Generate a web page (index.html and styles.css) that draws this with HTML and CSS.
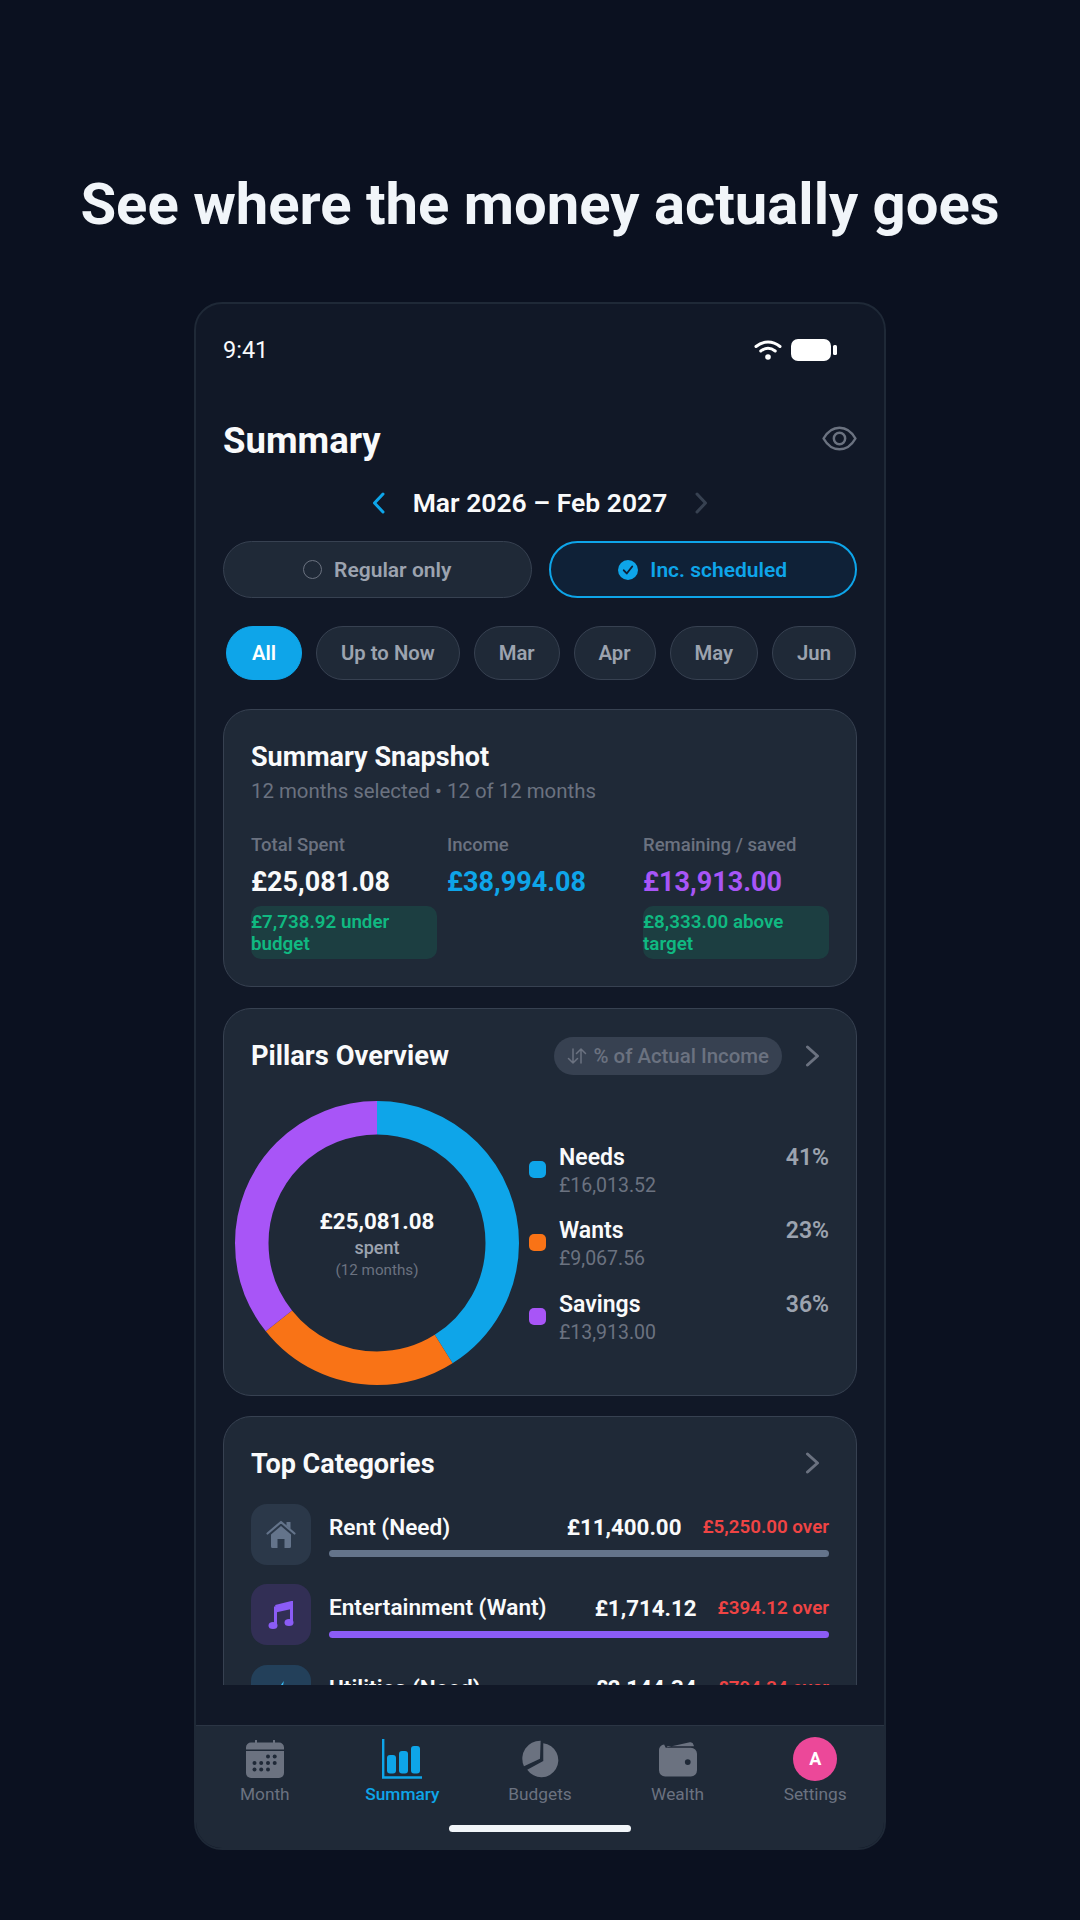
FILE: index.html
```html
<!DOCTYPE html>
<html lang="en">
<head>
<meta charset="utf-8">
<title>Summary</title>
<link rel="stylesheet" href="styles.css">
</head>
<body>
<h1 class="headline">See where the money actually goes</h1>
<main class="phone">
  <div class="status">
    <span class="status-time">9:41</span>
    <div class="status-icons">
      <svg class="ic-wifi" viewBox="0 0 28 21" aria-hidden="true"><path d="M2 7.500C9.500 1.500 18.500 1.500 26 7.500M6.800 12C11.500 8.500 16.500 8.500 21.200 12" fill="none" stroke="#fff" stroke-width="3" stroke-linecap="round"/><circle cx="14" cy="18" r="2.800" fill="#fff"/></svg>
      <svg class="ic-battery" viewBox="0 0 46 22" aria-hidden="true"><rect x="0" y="0" width="40" height="22" rx="7" fill="#fff"/><rect x="42" y="6" width="4" height="10" rx="1.500" fill="#fff"/></svg>
    </div>
  </div>
  <div class="scroll">
    <header class="page-head">
      <h2 class="page-title">Summary</h2>
      <svg class="ic-eye" viewBox="0 0 34 24" aria-hidden="true"><path d="M1.500 12C5.500 5 10.500 1.500 17 1.500S28.500 5 32.500 12C28.500 19 23.500 22.500 17 22.500S5.500 19 1.500 12Z" fill="none" stroke="#6b7280" stroke-width="2.400" stroke-linejoin="round"/><circle cx="17" cy="12" r="5.500" fill="none" stroke="#6b7280" stroke-width="2.400"/></svg>
    </header>
    <div class="date-row">
      <svg class="ic-chev-date" viewBox="0 0 13 22" aria-hidden="true"><path d="M11 2 2.500 11 11 20" fill="none" stroke="#0ea5e9" stroke-width="3" stroke-linecap="round" stroke-linejoin="round"/></svg>
      <span class="date-text">Mar 2026 – Feb 2027</span>
      <svg class="ic-chev-date" viewBox="0 0 13 22" aria-hidden="true"><path d="M2 2 10.500 11 2 20" fill="none" stroke="#374151" stroke-width="3" stroke-linecap="round" stroke-linejoin="round"/></svg>
    </div>
    <div class="toggles">
      <div class="toggle">
        <span class="radio"></span>
        <span>Regular only</span>
      </div>
      <div class="toggle toggle-on">
        <svg class="ic-check" viewBox="0 0 19 19" aria-hidden="true"><circle cx="9.500" cy="9.500" r="9.500" fill="#0ea5e9"/><path d="M5.500 9.800 8.300 12.800 13.500 6.200" fill="none" stroke="#0f2137" stroke-width="1.800" stroke-linecap="round" stroke-linejoin="round"/></svg>
        <span>Inc. scheduled</span>
      </div>
    </div>
    <div class="chips">
      <span class="chip chip-on">All</span>
      <span class="chip">Up to Now</span>
      <span class="chip">Mar</span>
      <span class="chip">Apr</span>
      <span class="chip">May</span>
      <span class="chip">Jun</span>
    </div>
    <section class="card snapshot">
      <h3 class="card-title">Summary Snapshot</h3>
      <p class="snap-sub">12 months selected • 12 of 12 months</p>
      <div class="snap-grid">
        <div>
          <div class="snap-label">Total Spent</div>
          <div class="snap-value">£25,081.08</div>
          <div class="snap-badge">£7,738.92 under budget</div>
        </div>
        <div>
          <div class="snap-label">Income</div>
          <div class="snap-value c-blue">£38,994.08</div>
        </div>
        <div>
          <div class="snap-label">Remaining / saved</div>
          <div class="snap-value c-purple">£13,913.00</div>
          <div class="snap-badge">£8,333.00 above target</div>
        </div>
      </div>
    </section>
    <section class="card pillars">
      <div class="card-head">
        <h3 class="card-title">Pillars Overview</h3>
        <div class="head-right">
          <span class="basis">
            <svg class="ic-swap" viewBox="0 0 20 16" aria-hidden="true"><path d="M6 1V15M6 15 1.500 10.500M6 15 10.500 10.500M14 15V1M14 1 9.500 5.500M14 1 18.500 5.500" fill="none" stroke="#6b7280" stroke-width="1.500" stroke-linecap="round" stroke-linejoin="round"/></svg>
            % of Actual Income
          </span>
          <svg class="ic-chev" viewBox="0 0 15 22" aria-hidden="true"><path d="M2.500 2 12.500 11 2.500 20" fill="none" stroke="#6b7280" stroke-width="3" stroke-linecap="round" stroke-linejoin="round"/></svg>
        </div>
      </div>
      <div class="pillar-body">
        <div class="donut">
          <svg class="donut-svg" viewBox="0 0 284 284" aria-hidden="true">
            <g fill="none" stroke-width="33.500" transform="rotate(-90 142 142)">
              <circle cx="142" cy="142" r="125.250" pathLength="100" stroke="#0ea5e9" stroke-dasharray="41.070 58.930"/>
              <circle cx="142" cy="142" r="125.250" pathLength="100" stroke="#f97316" stroke-dasharray="23.250 76.750" stroke-dashoffset="-41.070"/>
              <circle cx="142" cy="142" r="125.250" pathLength="100" stroke="#a855f7" stroke-dasharray="35.680 64.320" stroke-dashoffset="-64.320"/>
            </g>
          </svg>
          <div class="donut-center">
            <div class="donut-amt">£25,081.08</div>
            <div class="donut-lbl">spent</div>
            <div class="donut-sub">(12 months)</div>
          </div>
        </div>
        <div class="legend">
          <div class="legend-row">
            <span class="dot bg-blue"></span>
            <div class="legend-text"><div class="legend-name">Needs</div><div class="legend-amt">£16,013.52</div></div>
            <div class="legend-pct">41%</div>
          </div>
          <div class="legend-row">
            <span class="dot bg-orange"></span>
            <div class="legend-text"><div class="legend-name">Wants</div><div class="legend-amt">£9,067.56</div></div>
            <div class="legend-pct">23%</div>
          </div>
          <div class="legend-row">
            <span class="dot bg-purple"></span>
            <div class="legend-text"><div class="legend-name">Savings</div><div class="legend-amt">£13,913.00</div></div>
            <div class="legend-pct">36%</div>
          </div>
        </div>
      </div>
    </section>
    <section class="card cats">
      <div class="cats-head">
        <h3 class="card-title">Top Categories</h3>
        <svg class="ic-chev ic-chev-up" viewBox="0 0 15 22" aria-hidden="true"><path d="M2.500 2 12.500 11 2.500 20" fill="none" stroke="#6b7280" stroke-width="3" stroke-linecap="round" stroke-linejoin="round"/></svg>
      </div>
      <div class="cat-row">
        <div class="cat-icon cat-slate">
          <svg class="ic-cat" viewBox="0 0 30 28" aria-hidden="true"><path d="M1.500 13.500 15 2 28.500 13.500" fill="none" stroke="#64748b" stroke-width="2.200" stroke-linecap="round" stroke-linejoin="round"/><path d="M20.500 2H24.500V9L20.500 5.500Z" fill="#64748b"/><path d="M5 14.500 15 6 25 14.500V26.500A1.500 1.500 0 0 1 23.500 28H18.500V19H11.500V28H6.500A1.500 1.500 0 0 1 5 26.500Z" fill="#64748b"/></svg>
        </div>
        <div class="cat-main">
          <div class="cat-line">
            <span class="cat-name">Rent (Need)</span>
            <span class="cat-amt">£11,400.00</span>
            <span class="cat-over">£5,250.00 over</span>
          </div>
          <div class="cat-bar bar-slate"></div>
        </div>
      </div>
      <div class="cat-row">
        <div class="cat-icon cat-violet">
          <svg class="ic-cat" viewBox="0 0 30 28" aria-hidden="true"><path d="M9.500 5.500 25.500 1.500V21.500" fill="none" stroke="#8b5cf6" stroke-width="3"/><path d="M9.500 5.500 25.500 1.500V8L9.500 11.500Z" fill="#8b5cf6"/><path d="M9.500 5.500V24" fill="none" stroke="#8b5cf6" stroke-width="3"/><ellipse cx="7" cy="24.500" rx="4.500" ry="3.500" fill="#8b5cf6"/><ellipse cx="23" cy="21.500" rx="4.500" ry="3.500" fill="#8b5cf6"/></svg>
        </div>
        <div class="cat-main">
          <div class="cat-line">
            <span class="cat-name">Entertainment (Want)</span>
            <span class="cat-amt">£1,714.12</span>
            <span class="cat-over">£394.12 over</span>
          </div>
          <div class="cat-bar bar-violet"></div>
        </div>
      </div>
      <div class="cat-row">
        <div class="cat-icon cat-sky">
          <svg class="ic-cat ic-bolt" viewBox="0 0 30 30" aria-hidden="true"><path d="M18 0 6 17H14L12 30 24 12H16Z" fill="#38bdf8"/></svg>
        </div>
        <div class="cat-main">
          <div class="cat-line">
            <span class="cat-name">Utilities (Need)</span>
            <span class="cat-amt">£2,144.34</span>
            <span class="cat-over">£794.34 over</span>
          </div>
          <div class="cat-bar bar-sky"></div>
        </div>
      </div>
    </section>
  </div>
  <nav class="nav">
    <div class="nav-items">
      <div class="nav-item">
        <div class="nav-icon">
          <svg class="ic-nav" viewBox="0 0 38 38" aria-hidden="true"><path d="M10 0.500V4M28 0.500V4" stroke="#6b7280" stroke-width="2" stroke-linecap="round"/><path d="M5 2.500H33A5 5 0 0 1 38 7.500V9.500H0V7.500A5 5 0 0 1 5 2.500Z" fill="#6b7280"/><path d="M0 11H38V33A5 5 0 0 1 33 38H5A5 5 0 0 1 0 33Z" fill="#6b7280"/><g fill="#1f2937"><circle cx="22" cy="16.500" r="2"/><circle cx="28.700" cy="16.500" r="2"/><circle cx="8.500" cy="23" r="2"/><circle cx="15.200" cy="23" r="2"/><circle cx="22" cy="23" r="2"/><circle cx="28.700" cy="23" r="2"/><circle cx="8.500" cy="29.500" r="2"/><circle cx="15.200" cy="29.500" r="2"/><circle cx="22" cy="29.500" r="2"/></g></svg>
        </div>
        <span class="nav-label">Month</span>
      </div>
      <div class="nav-item nav-on">
        <div class="nav-icon">
          <svg class="ic-nav-chart" viewBox="0 0 40 40" aria-hidden="true"><path d="M1.200 0V38.500H40" fill="none" stroke="#0ea5e9" stroke-width="2.400"/><rect x="5" y="16" width="9" height="18.500" rx="3" fill="#0ea5e9"/><rect x="17" y="12" width="9" height="22.500" rx="3" fill="#0ea5e9"/><rect x="29" y="7" width="9" height="27.500" rx="3" fill="#0ea5e9"/></svg>
        </div>
        <span class="nav-label">Summary</span>
      </div>
      <div class="nav-item">
        <div class="nav-icon">
          <svg class="ic-nav" viewBox="60 26 116 116" aria-hidden="true"><path d="M120 28A55 55 0 0 0 69 106L118 83Z" fill="#6b7280"/><path d="M128 36A52 52 0 1 1 79 117L128 90Z" fill="#6b7280"/></svg>
        </div>
        <span class="nav-label">Budgets</span>
      </div>
      <div class="nav-item">
        <div class="nav-icon">
          <svg class="ic-nav" viewBox="0 0 37 34" aria-hidden="true"><path d="M8 5.500 30 0.800Q33 0.300 33.800 3.500L34 4.500H8Z" fill="#6b7280"/><path d="M5 3A5 5 0 0 0 0 8V28A6 6 0 0 0 6 34H31A6 6 0 0 0 37 28V12A6 6 0 0 0 31 6H6.500Z" fill="#6b7280"/><circle cx="28" cy="20" r="2.800" fill="#1f2937"/></svg>
        </div>
        <span class="nav-label">Wealth</span>
      </div>
      <div class="nav-item">
        <div class="nav-icon">
          <span class="avatar">A</span>
        </div>
        <span class="nav-label">Settings</span>
      </div>
    </div>
    <div class="home-bar"></div>
  </nav>
</main>
</body>
</html>
```

FILE: styles.css
```css
* { box-sizing: border-box; }
html, body { margin: 0; padding: 0; }
body {
  width: 1080px;
  height: 1920px;
  overflow: hidden;
  background: #0b1120;
  font-family: Roboto, "Noto Sans", sans-serif;
  color: #f9fafb;
}
h1, h2, h3, p { margin: 0; }

.headline {
  margin-top: 171px;
  height: 131px;
  line-height: 66px;
  font-size: 58px;
  font-weight: 700;
  text-align: center;
  color: #f1f5f9;
}

.phone {
  width: 692px;
  height: 1548px;
  margin: 0 auto;
  display: flex;
  flex-direction: column;
  background: #111827;
  border: 2px solid #1f2937;
  border-radius: 28px;
  overflow: hidden;
}

.status {
  flex: none;
  height: 91px;
  padding: 0 47px 0 27px;
  display: flex;
  align-items: center;
  justify-content: space-between;
}
.status-time { font-size: 23.5px; line-height: 28px; color: #f9fafb; }
.status-icons { display: flex; align-items: center; gap: 9px; }
.ic-wifi { width: 28px; height: 21px; display: block; }
.ic-battery { width: 46px; height: 22px; display: block; }

.scroll {
  flex: 1;
  min-height: 0;
  margin-bottom: 40px;
  padding: 0 27px;
  overflow: hidden;
}

.page-head {
  margin-top: 22px;
  height: 48px;
  display: flex;
  align-items: center;
  justify-content: space-between;
}
.page-title { font-size: 36.5px; font-weight: 700; line-height: 48px; color: #f9fafb; }
.ic-eye { width: 35px; height: 25px; display: block; margin-bottom: 5px; }

.date-row {
  margin-top: 18px;
  height: 40px;
  display: flex;
  align-items: center;
  justify-content: center;
  gap: 28px;
}
.date-text { font-size: 26.5px; line-height: 38px; margin-bottom: 1px; font-weight: 600; color: #f9fafb; }
.ic-chev-date { width: 13px; height: 22px; display: block; }

.toggles {
  margin-top: 18px;
  display: grid;
  grid-template-columns: 1fr 1fr;
  gap: 17px;
}
.toggle {
  height: 57px;
  display: flex;
  align-items: center;
  justify-content: center;
  gap: 12px;
  border: 1.5px solid #374151;
  border-radius: 29px;
  background: #1f2937;
  font-size: 21px;
  font-weight: 600;
  color: #9ca3af;
}
.toggle-on {
  border: 2px solid #0ea5e9;
  background: #0f2137;
  color: #0ea5e9;
}
.radio {
  width: 19px;
  height: 19px;
  border: 1.5px solid #6b7280;
  border-radius: 50%;
}
.ic-check { width: 20px; height: 20px; display: block; }

.chips {
  margin-top: 28px;
  padding: 0 1px 0 3px;
  display: flex;
  justify-content: space-between;
}
.chip {
  height: 54px;
  padding: 0 24px;
  display: flex;
  align-items: center;
  border: 1.5px solid #374151;
  border-radius: 27px;
  background: #1f2937;
  font-size: 20.3px;
  font-weight: 600;
  color: #9ca3af;
}
.chip-on {
  padding: 0 25px;
  border-color: #0ea5e9;
  background: #0ea5e9;
  color: #fff;
}

.card {
  margin-top: 20px;
  padding: 30px 27px 0;
  border: 1.5px solid #374151;
  border-radius: 28px;
  background: #1f2937;
}
.card-title { font-size: 27px; font-weight: 700; line-height: 34px; color: #f9fafb; }

.snapshot { margin-top: 29px; height: 278px; }
.snap-sub { margin-top: 3px; font-size: 20.4px; line-height: 28px; color: #6b7280; }
.snap-grid {
  margin-top: 27px;
  display: grid;
  grid-template-columns: repeat(3, 186px);
  column-gap: 10px;
}
.snap-label { font-size: 18.5px; line-height: 26px; font-weight: 500; color: #6b7280; }
.snap-value { margin-top: 6px; font-size: 27px; line-height: 36px; font-weight: 700; color: #f9fafb; }
.snap-badge {
  margin-top: 6px;
  padding: 4.5px 0;
  border-radius: 10px;
  background: rgba(16, 185, 129, 0.15);
  font-size: 18.8px;
  line-height: 22px;
  font-weight: 600;
  color: #10b981;
}
.c-blue { color: #0ea5e9; }
.c-purple { color: #a855f7; }

.pillars { margin-top: 21px; height: 388px; padding-top: 27.5px; }
.pillars .card-title { font-size: 27.3px; }
.card-head { display: flex; align-items: center; justify-content: space-between; height: 38px; }
.head-right { display: flex; align-items: center; gap: 23px; padding-right: 9px; }
.basis {
  height: 38px;
  padding: 0 13px;
  display: flex;
  align-items: center;
  gap: 7px;
  border-radius: 19px;
  background: #374151;
  font-size: 20.4px;
  font-weight: 500;
  color: #6b7280;
}
.ic-swap { width: 20px; height: 16px; display: block; }
.ic-chev { width: 15px; height: 22px; display: block; }
.ic-chev-up { margin-bottom: 2px; }

.pillar-body {
  margin: 26px 0 0 -16px;
  display: flex;
  align-items: flex-start;
  gap: 10px;
}
.donut { position: relative; flex: none; width: 284px; height: 284px; }
.donut-svg { width: 284px; height: 284px; display: block; }
.donut-center {
  position: absolute;
  inset: 0;
  display: flex;
  flex-direction: column;
  align-items: center;
  justify-content: center;
}
.donut-amt { font-size: 22.3px; line-height: 30px; font-weight: 700; color: #f9fafb; }
.donut-lbl { font-size: 18px; line-height: 24px; font-weight: 500; color: #9ca3af; }
.donut-sub { font-size: 15.2px; line-height: 20px; color: #6b7280; }

.legend { flex: 1; margin-top: 42px; display: flex; flex-direction: column; gap: 17.5px; }
.legend-row { display: flex; align-items: flex-start; gap: 13px; }
.dot { flex: none; margin-top: 18px; width: 17px; height: 17px; border-radius: 5px; }
.bg-blue { background: #0ea5e9; }
.bg-orange { background: #f97316; }
.bg-purple { background: #a855f7; }
.legend-text { flex: 1; }
.legend-name { font-size: 23px; line-height: 30px; font-weight: 600; color: #f9fafb; }
.legend-amt { font-size: 19.5px; line-height: 26px; color: #6b7280; }
.legend-pct { font-size: 23px; line-height: 30px; font-weight: 600; color: #9ca3af; }

.cats { height: 400px; }
.cats-head { display: flex; align-items: center; justify-content: space-between; padding-right: 9px; }
.cat-row { margin-top: 19.5px; display: flex; align-items: center; gap: 18px; }
.cats-head + .cat-row { margin-top: 22.5px; }
.cat-icon {
  flex: none;
  width: 60px;
  height: 61px;
  display: flex;
  align-items: center;
  justify-content: center;
  border-radius: 16px;
}
.cat-slate { background: #2b3849; }
.cat-violet { background: #322f55; }
.cat-sky { background: #23405a; }
.ic-cat { width: 30px; height: 28px; display: block; }
.cat-main { flex: 1; min-width: 0; }
.cat-line { display: flex; align-items: center; height: 32px; }
.cat-name { flex: 1; font-size: 22.6px; font-weight: 600; color: #f9fafb; }
.cat-amt { font-size: 22.3px; font-weight: 700; color: #f9fafb; }
.cat-over { margin-left: 21px; font-size: 18.8px; font-weight: 600; color: #ef4444; }
.cat-bar { margin-top: 7px; height: 7px; border-radius: 4px; }
.bar-slate { background: #64748b; }
.bar-violet { background: #8b5cf6; }
.bar-sky { background: #0ea5e9; }

.nav {
  flex: none;
  height: 123px;
  border-top: 1px solid #2b3544;
  background: #1f2937;
  padding-top: 8px;
  display: flex;
  flex-direction: column;
  align-items: center;
}
.nav-items { width: 100%; display: grid; grid-template-columns: repeat(5, 1fr); }
.nav-item { display: flex; flex-direction: column; align-items: center; }
.nav-icon { height: 49px; display: flex; align-items: center; justify-content: center; }
.ic-nav { width: 38px; height: 38px; display: block; }
.ic-nav-chart { width: 40px; height: 40px; display: block; }
.nav-label { font-size: 17.3px; line-height: 22px; color: #6b7280; }
.nav-on .nav-label { color: #0ea5e9; font-weight: 500; }
.avatar {
  width: 44px;
  height: 44px;
  display: flex;
  align-items: center;
  justify-content: center;
  border-radius: 50%;
  background: #ec4899;
  font-size: 18px;
  font-weight: 700;
  color: #fff;
}
.home-bar {
  margin-top: 20px;
  width: 182px;
  height: 7px;
  border-radius: 4px;
  background: #f1f5f9;
}
```
